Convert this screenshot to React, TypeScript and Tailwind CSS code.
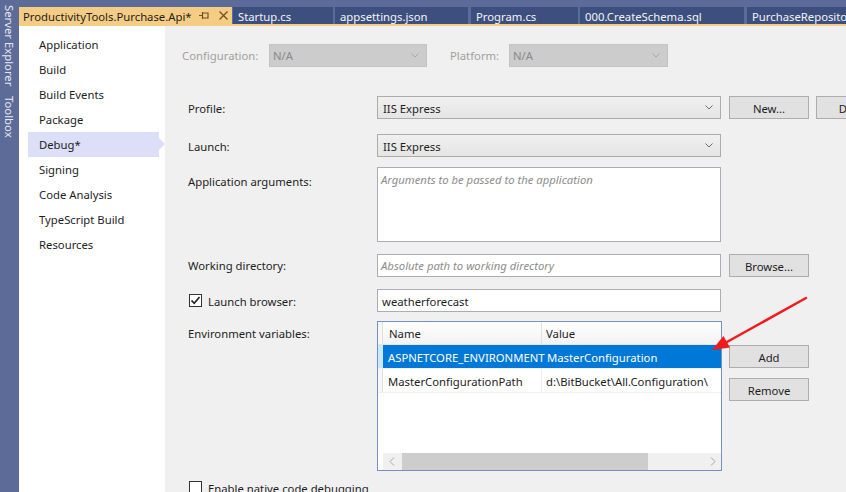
import React from "react";

const T = "pt-[2px]";
const T1 = "pt-px";

function Chevron({ color = "#6d6d6d" }: { color?: string }) {
  return (
    <svg width="8" height="5" viewBox="0 0 8 5">
      <path d="M0.5 0.5 L4 4 L7.5 0.5" fill="none" stroke={color} strokeWidth="1" />
    </svg>
  );
}

function Check() {
  return (
    <svg width="11" height="11" viewBox="0 0 11 11">
      <path d="M1.5 5.5 L4.2 8.3 L9.5 2" fill="none" stroke="#1e1e1e" strokeWidth="1.6" />
    </svg>
  );
}

function Btn({ children, className = "" }: { children: React.ReactNode; className?: string }) {
  return (
    <div className={"flex h-[23px] w-[80px] shrink-0 items-center justify-center whitespace-nowrap border border-[#adadad] bg-[#e1e1e1] text-[#1e1e1e] " + className}>
      <span className={T}>{children}</span>
    </div>
  );
}

function Select({ value }: { value: string }) {
  return (
    <div className="flex h-[23px] w-[344px] shrink-0 items-center justify-between border border-[#acacac] bg-gradient-to-b from-[#f0f0f0] to-[#e5e5e5] pl-[5px] pr-[7px] text-[#1e1e1e]">
      <span className={T}>{value}</span>
      <Chevron />
    </div>
  );
}

const navItems = [
  "Application",
  "Build",
  "Build Events",
  "Package",
  "Debug*",
  "Signing",
  "Code Analysis",
  "TypeScript Build",
  "Resources",
];

const tabs = [
  { t: "Startup.cs", w: 100, ml: 1 },
  { t: "appsettings.json", w: 133, ml: 2 },
  { t: "Program.cs", w: 107, ml: 3 },
  { t: "000.CreateSchema.sql", w: 164, ml: 2 },
  { t: "PurchaseRepository.cs", w: 120, ml: 3 },
];

export default function App() {
  return (
    <div className="relative flex h-[492px] w-[846px] overflow-hidden bg-[#f0f0f0] font-['Noto_Sans',sans-serif] text-[11.3px] leading-none">
      {/* left tool strip */}
      <div className="flex h-full w-[19px] shrink-0 flex-col items-center bg-[#5d6b99] pt-[5px] text-[#e6e8f0]">
        <span className="[writing-mode:vertical-rl]">Server Explorer</span>
        <span className="mt-[10px] [writing-mode:vertical-rl]">Toolbox</span>
      </div>

      <div className="flex min-w-0 flex-1 flex-col">
        {/* tab bar */}
        <div className="flex h-[24px] shrink-0 items-end bg-[#5d6b99]">
          <div className="flex h-[17px] w-[213px] shrink-0 items-center bg-[#f5cc84] pl-[4px] text-[#1e1e1e]">
            <span className={T}>ProductivityTools.Purchase.Api*</span>
            <svg className="ml-auto" width="11" height="9" viewBox="0 0 11 9">
              <path d="M0 4.5 H3.5 M3.5 1 V8 M3.5 2 H9 V7 H3.5" fill="none" stroke="#6b5327" strokeWidth="1.2" />
            </svg>
            <svg className="ml-[9px] mr-[4px]" width="9" height="9" viewBox="0 0 9 9">
              <path d="M0.5 0.5 L8.5 8.5 M8.5 0.5 L0.5 8.5" stroke="#6b5327" strokeWidth="1.3" />
            </svg>
          </div>
          {tabs.map((tb) => (
            <div
              key={tb.t}
              style={{ width: tb.w, marginLeft: tb.ml }}
              className="flex h-[17px] shrink-0 items-center overflow-hidden whitespace-nowrap bg-[#3d4f7e] pl-[5px] text-[#f2f4f8]"
            >
              <span className={T}>{tb.t}</span>
            </div>
          ))}
        </div>
        <div className="h-[2px] shrink-0 bg-[#f5cc84]" />

        <div className="flex min-h-0 flex-1">
          {/* nav */}
          <div className="flex w-[146px] shrink-0 flex-col bg-white pt-[6px] text-[#1e1e1e]">
            {navItems.map((n) =>
              n === "Debug*" ? (
                <div key={n} className="relative ml-[9px] flex h-[25px] w-[131px] items-center bg-[#dcdff7] pl-[11px]">
                  <span className={T1}>{n}</span>
                  <div className="absolute right-[-6px] top-[6px] h-0 w-0 border-y-[6px] border-l-[6px] border-y-transparent border-l-[#dcdff7]" />
                </div>
              ) : (
                <div key={n} className="ml-[9px] flex h-[25px] items-center pl-[11px]">
                  <span className={T1}>{n}</span>
                </div>
              )
            )}
          </div>

          {/* main */}
          <div className="flex min-w-0 flex-1 flex-col bg-[#f0f0f0] text-[#1e1e1e]">
            {/* config row */}
            <div className="mt-[18px] flex items-center pl-[17px]">
              <span className={"w-[87px] text-[#a0a0a0] " + T1}>Configuration:</span>
              <div className="flex h-[23px] w-[158px] items-center justify-between border border-[#c4c4c4] bg-[#cccccc] pl-[3px] pr-[7px] text-[#8a8a8a]">
                <span className={T1}>N/A</span>
                <Chevron color="#a8a8a8" />
              </div>
              <span className={"ml-[23px] w-[59px] text-[#a0a0a0] " + T1}>Platform:</span>
              <div className="flex h-[23px] w-[159px] items-center justify-between border border-[#c4c4c4] bg-[#cccccc] pl-[3px] pr-[7px] text-[#8a8a8a]">
                <span className={T1}>N/A</span>
                <Chevron color="#a8a8a8" />
              </div>
            </div>

            <div className="ml-[15px] mt-[15px] h-px bg-[#a0a0a0]" />

            {/* form rows */}
            <div className="flex flex-col pl-[23px]">
              <div className="mt-[14px] flex items-center">
                <span className={"w-[189px] shrink-0 " + T}>Profile:</span>
                <Select value="IIS Express" />
                <Btn className="ml-[8px]">New...</Btn>
                <Btn className="ml-[7px]">Delete</Btn>
              </div>

              <div className="mt-[15px] flex items-center">
                <span className={"w-[189px] shrink-0 " + T}>Launch:</span>
                <Select value="IIS Express" />
              </div>

              <div className="mt-[10px] flex items-start">
                <span className="w-[189px] shrink-0 pt-[9px]">Application arguments:</span>
                <div className="h-[75px] w-[344px] shrink-0 border border-[#abadb3] bg-white pl-[3px] pt-[6px] italic text-[#8d8d8d]">
                  Arguments to be passed to the application
                </div>
              </div>

              <div className="mt-[12px] flex items-center">
                <span className={"w-[189px] shrink-0 " + T1}>Working directory:</span>
                <div className="flex h-[23px] w-[344px] shrink-0 items-center border border-[#abadb3] bg-white pl-[3px] italic text-[#8d8d8d]">
                  <span className={T1}>Absolute path to working directory</span>
                </div>
                <Btn className="ml-[8px]">Browse...</Btn>
              </div>

              <div className="mt-[12px] flex items-center">
                <div className="flex w-[189px] shrink-0 items-center">
                  <div className="ml-[1px] flex h-[13px] w-[13px] items-center justify-center border border-[#333333] bg-white">
                    <Check />
                  </div>
                  <span className={"ml-[6px] " + T}>Launch browser:</span>
                </div>
                <div className="flex h-[23px] w-[344px] shrink-0 items-center border border-[#abadb3] bg-white pl-[4px]">
                  <span className={T}>weatherforecast</span>
                </div>
              </div>

              <div className="mt-[9px] flex items-start">
                <span className="w-[189px] shrink-0 pt-[7px]">Environment variables:</span>
                <div className="flex h-[150px] w-[345px] shrink-0 flex-col border border-[#7292c4] bg-white">
                  {/* header */}
                  <div className="flex h-[23px] shrink-0 border-b border-[#e5e5e5] bg-gradient-to-b from-white to-[#f3f3f3]">
                    <div className="w-[5px] shrink-0 border-r border-[#e0e0e0] bg-[#f7f7f7]" />
                    <div className="flex w-[159px] shrink-0 items-center border-r border-[#e0e0e0] pl-[6px]"><span className={T}>Name</span></div>
                    <div className="flex flex-1 items-center pl-[4px]"><span className={T}>Value</span></div>
                  </div>
                  {/* row 1 */}
                  <div className="flex h-[24px] shrink-0 border-b border-[#f0f0f0]">
                    <div className="w-[5px] shrink-0 bg-[#cce8ff]" />
                    <div className="flex flex-1 items-center bg-[#0078d7] text-white">
                      <div className={"w-[159px] shrink-0 whitespace-nowrap pl-[5px] " + T}>ASPNETCORE_ENVIRONMENT</div>
                      <div className={"whitespace-nowrap pl-[5px] " + T}>MasterConfiguration</div>
                    </div>
                  </div>
                  {/* row 2 */}
                  <div className="flex h-[24px] shrink-0 border-b border-[#f0f0f0]">
                    <div className="w-[5px] shrink-0 border-r border-[#e0e0e0] bg-[#f7f7f7]" />
                    <div className="flex w-[159px] shrink-0 items-center whitespace-nowrap border-r border-[#ececec] pl-[5px]"><span className={T}>MasterConfigurationPath</span></div>
                    <div className="flex flex-1 items-center whitespace-nowrap pl-[4px]"><span className={T}>d:\BitBucket\All.Configuration\</span></div>
                  </div>
                  <div className="flex-1" />
                  {/* scrollbar */}
                  <div className="flex h-[17px] shrink-0">
                    <div className="w-[5px] shrink-0 bg-white" />
                    <div className="flex flex-1 items-center bg-[#f0f0f0]">
                      <svg className="ml-[6px]" width="6" height="9" viewBox="0 0 6 9">
                        <path d="M5 0.5 L1 4.5 L5 8.5" fill="none" stroke="#a6a6a6" strokeWidth="1" />
                      </svg>
                      <div className="ml-[7px] h-full w-[246px] bg-[#cdcdcd]" />
                      <svg className="ml-auto mr-[5px]" width="6" height="9" viewBox="0 0 6 9">
                        <path d="M1 0.5 L5 4.5 L1 8.5" fill="none" stroke="#a6a6a6" strokeWidth="1" />
                      </svg>
                    </div>
                  </div>
                </div>
                <div className="ml-[7px] mt-[24px] flex flex-col">
                  <Btn>Add</Btn>
                  <Btn className="mt-[10px]">Remove</Btn>
                </div>
              </div>

              <div className="mt-[10px] flex items-center">
                <div className="ml-[1px] h-[13px] w-[13px] shrink-0 border border-[#333333] bg-white" />
                <span className={"ml-[6px] whitespace-nowrap " + T}>Enable native code debugging</span>
              </div>
            </div>
          </div>
        </div>
      </div>

      {/* annotation arrow */}
      <svg className="pointer-events-none absolute left-0 top-0" width="846" height="492" viewBox="0 0 846 492">
        <line x1="806" y1="298" x2="726" y2="342.5" stroke="#f21a1a" strokeWidth="2.5" strokeLinecap="round" />
        <polygon points="712,350 730,347.5 723.5,336" fill="#f21a1a" />
      </svg>
    </div>
  );
}
